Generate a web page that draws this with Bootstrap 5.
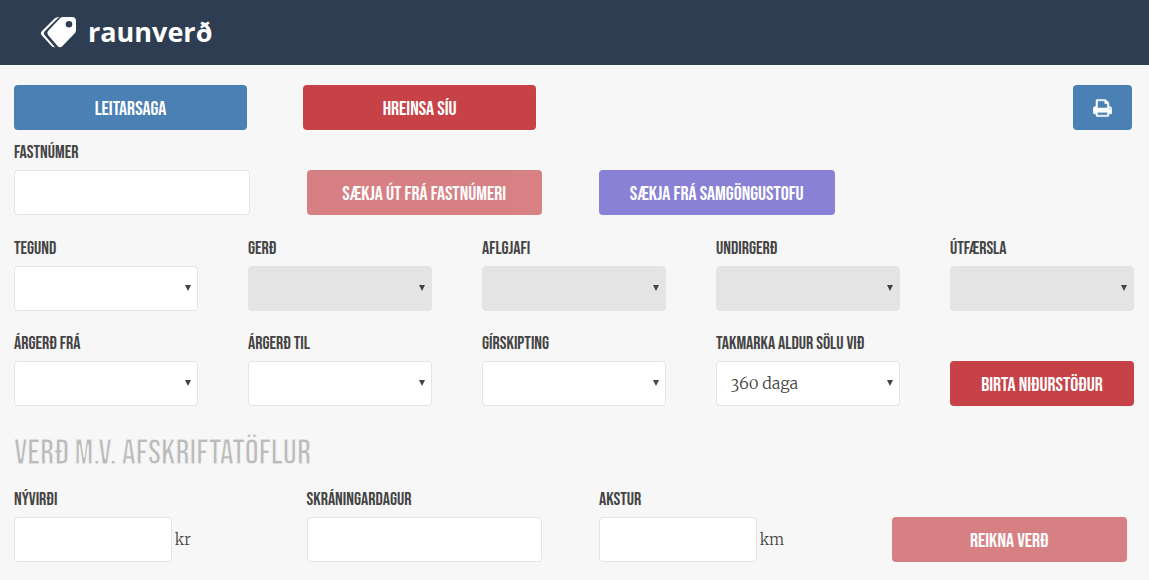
<!DOCTYPE html>
<html lang="is">
<head>
<meta charset="utf-8">
<meta name="viewport" content="width=device-width, initial-scale=1">
<title>Raunverð</title>
<link href="https://cdn.jsdelivr.net/npm/bootstrap@5.3.0/dist/css/bootstrap.min.css" rel="stylesheet">
<style>
  :root { --narrow: "Bebas Neue", "Liberation Sans Narrow", "Roboto Condensed", "Liberation Sans", sans-serif; }
  body { background: #f7f7f7; color: #444; font: 300 16px/24px Merriweather, "Liberation Serif", serif; }
  .topbar { background: #2e3d52; min-height: 65px; padding: 0 40px; }
  .brand-name { font: 700 27px/36px "Open Sans", sans-serif; color: #fff; padding-bottom: 2px; margin-left: 11px; }
  .page { padding: 20px 15px 18px 14px; }

  .tools { grid-template-columns: 19fr 19fr 44fr; column-gap: 56px; padding-right: 2px; margin-bottom: 12px; }
  .four { grid-template-columns: repeat(4, minmax(0, 1fr)); column-gap: 57px; padding-right: 7px; }
  .five { grid-template-columns: repeat(5, minmax(0, 1fr)); gap: 22px 50px; margin-top: 23px; }

  .form-label { font: 400 18px/22px var(--narrow); text-transform: uppercase; margin-bottom: 6px; display: block; white-space: nowrap; }
  .form-control, .form-select { height: 45px; border: 1px solid #e4e4e4; border-radius: 4px; background-color: #fff; color: #444; font-size: 16px; font-weight: 300; font-variant-numeric: oldstyle-nums; line-height: 24px; padding: 8px 24px 10px 14px; }
  .form-select { background-image: url("data:image/svg+xml,%3Csvg xmlns='http://www.w3.org/2000/svg' viewBox='0 0 6 6'%3E%3Cpath fill='%23444' d='M0 0h6L3 6z'/%3E%3C/svg%3E"); background-size: 6px 6px; background-position: right 6px top 18px; }
  .form-select:disabled { background-color: #e4e4e4; }
  .amount { flex: 0 0 67%; width: 67%; }
  .with-unit { gap: 3px; font-size: 15px; }

  .btn { --fill: #c64247; height: 45px; padding: 3px 8px 0; border: 0; border-radius: 4px; font: 400 20px/42px var(--narrow); text-transform: uppercase; white-space: nowrap; }
  .btn, .btn:hover, .btn:disabled { color: #fff; background: var(--fill); }
  .btn-blue { --fill: #4a80b4; }
  .btn-violet { --fill: #8881d6; }
  .btn:disabled { opacity: .65; }
  .btn-print { width: 59px; padding: 0; }
  .section-title { font: 400 35px/44px var(--narrow); color: #bbb; -webkit-text-stroke: 1px #f7f7f7; text-transform: uppercase; margin: 26px 0 13px; }

  @media (max-width: 767px) {
    .tools { grid-template-columns: 1fr 1fr auto; column-gap: 16px; }
    .four, .five { grid-template-columns: repeat(2, minmax(0, 1fr)); gap: 16px; }
  }
</style>
</head>
<body>
<header class="topbar d-flex align-items-center">
  <a href="#" class="d-flex align-items-center text-decoration-none">
    <svg width="37" height="31" viewBox="0 0 37 31" fill="#fff" aria-hidden="true">
      <path fill-rule="evenodd" d="M23 0h9q4 0 4 4v9q0 2-1.500 3.500L22 29.500q-2 1.500-4 0L8 18q-1.500-2 0-4L20 1.200Q21.500 0 23 0zM29 4a3.300 3.300 0 1 0 0 6.600a3.300 3.300 0 0 0 0-6.600z"/>
      <path d="M19.500 0Q16 0 14.500 1.500L1.500 14.500Q0 16 1.500 18L12 29.500Q13 30.500 15 30.300L4.500 18Q3 16 4.500 14.500L17 2z"/>
    </svg>
    <span class="brand-name">raunverð</span>
  </a>
</header>

<main class="page">
  <div class="tools d-grid">
    <button type="button" class="btn btn-blue">Leitarsaga</button>
    <button type="button" class="btn btn-red">Hreinsa síu</button>
    <button type="button" class="btn btn-blue btn-print ms-auto d-flex align-items-center justify-content-center" aria-label="Prenta">
      <svg width="19" height="20" viewBox="0 0 1664 1792" fill="#fff" aria-hidden="true"><path d="M384 1536h896v-256h-896v256zM384 896h896v-384h-160q-40 0-68-28t-28-68v-160h-640v640zM1536 960q0-26-19-45t-45-19-45 19-19 45 19 45 45 19 45-19 19-45zM1664 960v416q0 13-9.500 22.500t-22.500 9.500h-224v160q0 40-28 68t-68 28h-960q-40 0-68-28t-28-68v-160h-224q-13 0-22.500-9.500t-9.500-22.500v-416q0-79 56.500-135.500t135.500-56.500h64v-544q0-40 28-68t68-28h672q40 0 88 20t76 48l152 152q28 28 48 76t20 88v256h64q79 0 135.500 56.500t56.500 135.500z" stroke="#fff" stroke-width="50"/></svg>
    </button>
  </div>

  <form>
    <div class="four d-grid align-items-end">
      <div><label class="form-label" for="fastnumer">Fastnúmer</label><input class="form-control" id="fastnumer" type="text"></div>
      <button type="button" class="btn" disabled>Sækja út frá fastnúmeri</button>
      <button type="button" class="btn btn-violet">Sækja frá Samgöngustofu</button>
    </div>

    <div class="five d-grid align-items-end">
      <div><label class="form-label" for="tegund">Tegund</label><select class="form-select" id="tegund"><option></option></select></div>
      <div><label class="form-label" for="gerd">Gerð</label><select class="form-select" id="gerd" disabled><option></option></select></div>
      <div><label class="form-label" for="aflgjafi">Aflgjafi</label><select class="form-select" id="aflgjafi" disabled><option></option></select></div>
      <div><label class="form-label" for="undirgerd">Undirgerð</label><select class="form-select" id="undirgerd" disabled><option></option></select></div>
      <div><label class="form-label" for="utfaersla">Útfærsla</label><select class="form-select" id="utfaersla" disabled><option></option></select></div>
      <div><label class="form-label" for="fra">Árgerð frá</label><select class="form-select" id="fra"><option></option></select></div>
      <div><label class="form-label" for="til">Árgerð til</label><select class="form-select" id="til"><option></option></select></div>
      <div><label class="form-label" for="girskipting">Gírskipting</label><select class="form-select" id="girskipting"><option></option></select></div>
      <div><label class="form-label" for="aldur">Takmarka aldur sölu við</label><select class="form-select" id="aldur"><option>360 daga</option></select></div>
      <button type="button" class="btn btn-red">Birta niðurstöður</button>
    </div>
  </form>

  <h2 class="section-title">Verð m.v. afskriftatöflur</h2>

  <form class="four d-grid align-items-end">
    <div>
      <label class="form-label" for="nyvirdi">Nývirði</label>
      <div class="with-unit d-flex align-items-center"><input class="form-control amount" id="nyvirdi" type="text"><span>kr</span></div>
    </div>
    <div><label class="form-label" for="dagur">Skráningardagur</label><input class="form-control" id="dagur" type="text"></div>
    <div>
      <label class="form-label" for="akstur">Akstur</label>
      <div class="with-unit d-flex align-items-center"><input class="form-control amount" id="akstur" type="text"><span>km</span></div>
    </div>
    <button type="button" class="btn" disabled>Reikna verð</button>
  </form>
</main>
<script src="https://cdn.jsdelivr.net/npm/bootstrap@5.3.0/dist/js/bootstrap.bundle.min.js"></script>
</body>
</html>
